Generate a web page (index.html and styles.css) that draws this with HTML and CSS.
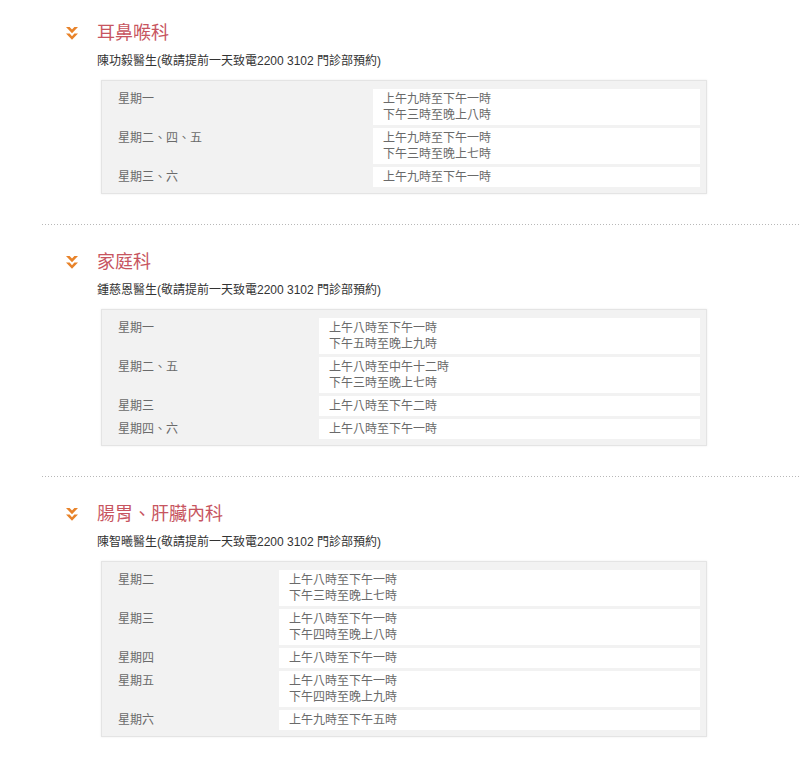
FILE: index.html
```html
<!DOCTYPE html>
<html lang="zh-Hant">
<head>
<meta charset="utf-8">
<link rel="stylesheet" href="styles.css">
</head>
<body>
<div class="page">
  <section class="section">
    <div class="head">
      <svg class="icon" width="12" height="13" viewBox="0 0 12 13"><path d="M0 0 L3.6 0 L6 2.6 L8.4 0 L12 0 L6 6.2 Z M0 6.6 L3.6 6.6 L6 9.2 L8.4 6.6 L12 6.6 L6 12.8 Z" fill="#e8832a"/></svg>
      <h2 class="title">耳鼻喉科</h2>
    </div>
    <p class="doctor">陳功毅醫生(敬請提前一天致電2200 3102 門診部預約)</p>
    <div class="box">
      <table class="hours t1">
        <tr><td class="day">星期一</td><td class="time">上午九時至下午一時<br>下午三時至晚上八時</td></tr>
        <tr><td class="day">星期二、四、五</td><td class="time">上午九時至下午一時<br>下午三時至晚上七時</td></tr>
        <tr><td class="day">星期三、六</td><td class="time">上午九時至下午一時</td></tr>
      </table>
    </div>
  </section>
  <div class="sep"></div>
  <section class="section">
    <div class="head">
      <svg class="icon" width="12" height="13" viewBox="0 0 12 13"><path d="M0 0 L3.6 0 L6 2.6 L8.4 0 L12 0 L6 6.2 Z M0 6.6 L3.6 6.6 L6 9.2 L8.4 6.6 L12 6.6 L6 12.8 Z" fill="#e8832a"/></svg>
      <h2 class="title">家庭科</h2>
    </div>
    <p class="doctor">鍾慈恩醫生(敬請提前一天致電2200 3102 門診部預約)</p>
    <div class="box">
      <table class="hours t2">
        <tr><td class="day">星期一</td><td class="time">上午八時至下午一時<br>下午五時至晚上九時</td></tr>
        <tr><td class="day">星期二、五</td><td class="time">上午八時至中午十二時<br>下午三時至晚上七時</td></tr>
        <tr><td class="day">星期三</td><td class="time">上午八時至下午二時</td></tr>
        <tr><td class="day">星期四、六</td><td class="time">上午八時至下午一時</td></tr>
      </table>
    </div>
  </section>
  <div class="sep"></div>
  <section class="section">
    <div class="head">
      <svg class="icon" width="12" height="13" viewBox="0 0 12 13"><path d="M0 0 L3.6 0 L6 2.6 L8.4 0 L12 0 L6 6.2 Z M0 6.6 L3.6 6.6 L6 9.2 L8.4 6.6 L12 6.6 L6 12.8 Z" fill="#e8832a"/></svg>
      <h2 class="title">腸胃、肝臟內科</h2>
    </div>
    <p class="doctor">陳智曦醫生(敬請提前一天致電2200 3102 門診部預約)</p>
    <div class="box">
      <table class="hours t3">
        <tr><td class="day">星期二</td><td class="time">上午八時至下午一時<br>下午三時至晚上七時</td></tr>
        <tr><td class="day">星期三</td><td class="time">上午八時至下午一時<br>下午四時至晚上八時</td></tr>
        <tr><td class="day">星期四</td><td class="time">上午八時至下午一時</td></tr>
        <tr><td class="day">星期五</td><td class="time">上午八時至下午一時<br>下午四時至晚上九時</td></tr>
        <tr><td class="day">星期六</td><td class="time">上午九時至下午五時</td></tr>
      </table>
    </div>
  </section>
</div>
</body>
</html>
```

FILE: styles.css
```css
html, body {
  margin: 0;
  padding: 0;
  background: #ffffff;
}

body {
  font-family: "Liberation Sans", "Noto Sans CJK TC", sans-serif;
  color: #333333;
}

.page {
  padding: 21px 0 20px 42px;
}

.section {
  padding-left: 24px;
}

.head {
  display: flex;
  align-items: center;
  height: 24px;
  gap: 19px;
}

.icon {
  display: block;
  flex: none;
}

.title {
  margin: 0;
  font-size: 18px;
  line-height: 24px;
  font-weight: normal;
  color: #c75560;
}

.doctor {
  margin: 8px 0 0 31px;
  font-size: 12px;
  line-height: 16px;
  color: #333333;
}

.box {
  margin: 11px 0 30px 35px;
  width: 606px;
  box-sizing: border-box;
  border: 1px solid #e4e4e4;
  box-shadow: 0 0 2px rgba(0, 0, 0, 0.08);
  background: #f2f2f2;
  padding: 5px 3px 3px 3px;
}

.hours {
  width: 100%;
  border-collapse: separate;
  border-spacing: 3px;
  font-size: 12px;
  line-height: 16px;
  color: #6a6a6a;
}

.hours td {
  vertical-align: top;
  padding: 2px 10px;
}

.day {
  box-sizing: border-box;
}

.time {
  background: #ffffff;
}

.t1 .day { width: 262px; }
.t2 .day { width: 208px; }
.t3 .day { width: 168px; }

.sep {
  height: 1px;
  margin-bottom: 25px;
  background-image: linear-gradient(to right, #b8b8b8 1px, transparent 1px);
  background-size: 3px 1px;
  background-repeat: repeat-x;
}
```
